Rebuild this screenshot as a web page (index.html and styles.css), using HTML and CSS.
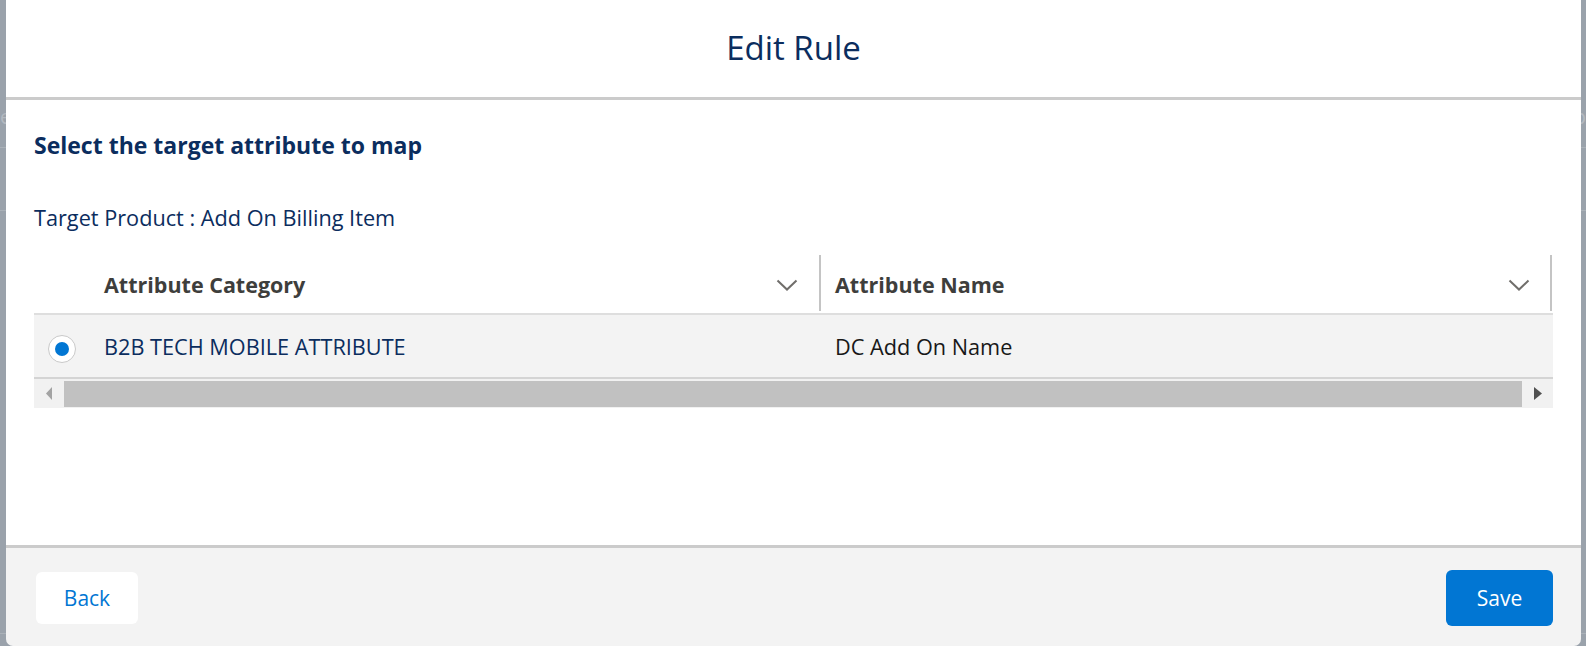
FILE: index.html
```html
<!DOCTYPE html>
<html lang="en">
<head>
<meta charset="utf-8">
<title>Edit Rule</title>
<link rel="stylesheet" href="styles.css">
</head>
<body>
<div class="backdrop">
  <div class="bd-text"><span class="bd-left">e</span><span class="bd-right">b</span></div>
  <div class="bd-line bd-line-1"></div>
  <div class="bd-line bd-line-2"></div>
  <div class="bd-line bd-line-3"></div>
</div>

<section class="modal" role="dialog" aria-labelledby="modal-title">
  <header class="modal-header">
    <h2 id="modal-title" class="modal-title">Edit Rule</h2>
  </header>

  <div class="modal-body">
    <h3 class="section-title">Select the target attribute to map</h3>
    <p class="target-line">Target Product : Add On Billing Item</p>

    <div class="table">
      <div class="thead">
        <div class="th th-select"></div>
        <div class="th th-col">
          <span class="th-label">Attribute Category</span>
          <svg class="chevron" width="22" height="12" viewBox="0 0 22 12"><polyline points="1.5,1.5 11,10.5 20.5,1.5" fill="none" stroke="#706e6b" stroke-width="2"/></svg>
          <span class="th-divider"></span>
        </div>
        <div class="th th-col th-col-last">
          <span class="th-label">Attribute Name</span>
          <svg class="chevron" width="22" height="12" viewBox="0 0 22 12"><polyline points="1.5,1.5 11,10.5 20.5,1.5" fill="none" stroke="#706e6b" stroke-width="2"/></svg>
          <span class="th-divider"></span>
        </div>
      </div>

      <div class="tr">
        <div class="td td-select">
          <span class="radio"><span class="radio-dot"></span></span>
        </div>
        <div class="td td-category">B2B TECH MOBILE ATTRIBUTE</div>
        <div class="td td-name">DC Add On Name</div>
      </div>

      <div class="scrollbar">
        <span class="sb-btn sb-left"><svg width="6" height="13" viewBox="0 0 6 13"><polygon points="6,0 0,6.5 6,13" fill="#a3a3a3"/></svg></span>
        <span class="sb-thumb"></span>
        <span class="sb-btn sb-right"><svg width="8" height="13" viewBox="0 0 8 13"><polygon points="0,0 8,6.5 0,13" fill="#505050"/></svg></span>
      </div>
    </div>
  </div>

  <footer class="modal-footer">
    <button class="btn btn-neutral" type="button">Back</button>
    <button class="btn btn-brand" type="button">Save</button>
  </footer>
</section>
</body>
</html>
```

FILE: styles.css
```css
* {
  box-sizing: border-box;
}

html, body {
  margin: 0;
  padding: 0;
}

body {
  width: 1586px;
  height: 646px;
  overflow: hidden;
  background: #9aa2ab;
  font-family: "Open Sans", "Noto Sans", sans-serif;
  position: relative;
}

/* page behind the overlay */
.backdrop {
  display: flex;
  flex-direction: column;
  height: 646px;
}

.bd-text {
  display: flex;
  justify-content: space-between;
  margin-top: 104px;
  height: 26px;
  font-size: 20px;
  line-height: 26px;
  color: #b3b9c0;
}

.bd-left {
  margin-left: 0;
}

.bd-right {
  margin-right: 0;
}

.bd-line {
  height: 1px;
  background: #aab1b8;
}

.bd-line-1 {
  margin-top: 17px;
}

.bd-line-2 {
  margin-top: 62px;
}

.bd-line-3 {
  margin-top: 422px;
}

/* modal */
.modal {
  position: absolute;
  top: 0;
  left: 6px;
  width: 1575px;
  height: 646px;
  display: flex;
  flex-direction: column;
  border-radius: 0 0 7px 7px;
  overflow: hidden;
}

.modal-header {
  height: 100px;
  flex: none;
  background: #ffffff;
  border-bottom: 3px solid #cbcbcb;
  display: flex;
  align-items: center;
  justify-content: center;
}

.modal-title {
  margin: 0 0 1px 0;
  font-size: 33px;
  font-weight: 400;
  line-height: 40px;
  color: #0b2d5e;
}

.modal-body {
  flex: 1;
  background: #ffffff;
  padding: 30px 28px 0 28px;
}

.section-title {
  margin: 0;
  font-size: 23px;
  font-weight: 700;
  line-height: 30px;
  color: #0b2d5e;
}

.target-line {
  margin: 43px 0 0 0;
  font-size: 21.7px;
  line-height: 30px;
  color: #0b2d5e;
}

/* table */
.table {
  margin-top: 19px;
  width: 1519px;
}

.thead {
  display: grid;
  grid-template-columns: 70px 717px 732px;
  height: 63px;
  border-bottom: 2px solid #dedede;
}

.th {
  position: relative;
  display: flex;
  align-items: center;
}

.th-col {
  padding-left: 0;
}

.th-col-last {
  padding-left: 14px;
}

.th-label {
  flex: 1;
  font-size: 21.5px;
  font-weight: 700;
  color: #3e3e3c;
  margin-top: 4px;
}

.chevron {
  margin-right: 23px;
  margin-top: 4px;
}

.th-divider {
  position: absolute;
  right: 0;
  top: 3px;
  bottom: 2px;
  width: 2px;
  background: #c4c4c4;
}

.th-col-last .th-divider {
  right: 1px;
}

.tr {
  display: grid;
  grid-template-columns: 70px 717px 732px;
  height: 64px;
  background: #f3f3f3;
  border-bottom: 2px solid #d4d4d4;
}

.td {
  display: flex;
  align-items: center;
  font-size: 21.7px;
}

.td-select {
  padding-left: 14px;
}

.td-category {
  color: #0b2d5e;
}

.td-name {
  padding-left: 14px;
  color: #181818;
}

.radio {
  width: 28px;
  height: 28px;
  border-radius: 50%;
  border: 1px solid #c9c9c9;
  background: #ffffff;
  display: flex;
  align-items: center;
  justify-content: center;
  margin-top: 6px;
}

.radio-dot {
  width: 14px;
  height: 14px;
  border-radius: 50%;
  background: #0176d3;
}

.scrollbar {
  display: flex;
  align-items: center;
  height: 29px;
  background: #f1f1f1;
}

.sb-btn {
  display: flex;
  align-items: center;
  justify-content: center;
  height: 29px;
}

.sb-left {
  width: 30px;
  justify-content: flex-start;
  padding-left: 12px;
}

.sb-right {
  width: 31px;
  justify-content: flex-start;
  padding-left: 12px;
}

.sb-thumb {
  flex: 1;
  height: 26px;
  margin-top: 1px;
  background: #c1c1c1;
}

/* footer */
.modal-footer {
  height: 101px;
  flex: none;
  background: #f3f3f3;
  border-top: 3px solid #cbcbcb;
  display: flex;
  align-items: center;
  justify-content: space-between;
  padding: 2px 28px 0 30px;
}

.btn {
  font-family: "Open Sans", "Noto Sans", sans-serif;
  font-size: 21px;
  border: none;
  border-radius: 6px;
  cursor: pointer;
  padding: 0;
}

.btn-neutral {
  width: 102px;
  height: 52px;
  background: #ffffff;
  color: #0176d3;
}

.btn-brand {
  width: 107px;
  height: 56px;
  background: #0176d3;
  color: #ffffff;
}
```
